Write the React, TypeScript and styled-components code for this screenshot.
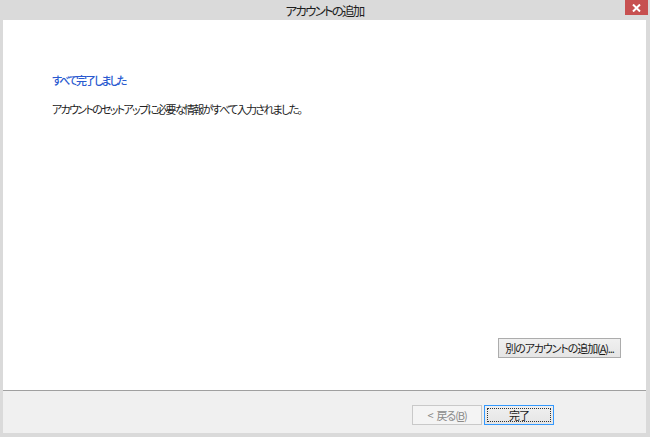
import React from "react";
import styled, { createGlobalStyle } from "styled-components";

const Global = createGlobalStyle`
  html, body { margin: 0; padding: 0; background: #dadada; }
  * { box-sizing: border-box; }
`;

const FONT = `"Noto Sans CJK JP", "Noto Sans", sans-serif`;

const Window = styled.div`
  width: 650px;
  height: 437px;
  background: #dadada;
  display: flex;
  flex-direction: column;
  padding: 0 4px 4px 3px;
  font-family: ${FONT};
  font-feature-settings: "palt";
`;

const TitleBar = styled.div`
  height: 20px;
  display: grid;
  grid-template-columns: 1fr auto 1fr;
  align-items: start;
`;

const Title = styled.div`
  grid-column: 2;
  font-size: 12.5px;
  line-height: 21px;
  color: #1e1e1e;
  letter-spacing: -1.8px;
  white-space: nowrap;
`;

const CloseButton = styled.div`
  grid-column: 3;
  justify-self: end;
  margin-right: -2px;
  width: 23px;
  height: 15px;
  background: #c75050;
  display: flex;
  align-items: center;
  justify-content: center;
`;

const Content = styled.div`
  flex: 1;
  background: #ffffff;
  border-bottom: 1px solid #a0a0a0;
  display: flex;
  flex-direction: column;
  padding: 52px 25px 32px 49px;
`;

const Heading = styled.div`
  font-size: 11px;
  line-height: 16px;
  color: #2a5ad0;
  font-weight: 500;
  letter-spacing: -2px;
  white-space: nowrap;
`;

const Message = styled.div`
  margin-top: 13px;
  font-size: 11px;
  line-height: 16px;
  color: #222;
  letter-spacing: -1.7px;
  white-space: nowrap;
`;

const Spacer = styled.div`
  flex: 1;
`;

const Button = styled.div<{ $w: number; $variant?: "default" | "disabled" | "normal" }>`
  width: ${(p) => p.$w}px;
  height: 20px;
  font-size: 11px;
  line-height: 18px;
  text-align: center;
  white-space: nowrap;
  position: relative;
  color: ${(p) => (p.$variant === "disabled" ? "#8a8a8a" : "#1a1a1a")};
  border: 1px solid
    ${(p) =>
      p.$variant === "default" ? "#3399ff" : p.$variant === "disabled" ? "#c9c9c9" : "#acacac"};
  background: ${(p) =>
    p.$variant === "disabled" ? "#f4f4f4" : "linear-gradient(#f0f0f0, #e5e5e5)"};
  letter-spacing: -1.1px;
`;

const FocusRect = styled.div`
  position: absolute;
  inset: 2px;
  border: 1px dotted #333;
`;

const AddRow = styled.div`
  display: flex;
  justify-content: flex-end;
`;

const Footer = styled.div`
  height: 42px;
  background: #f0f0f0;
  display: flex;
  justify-content: flex-end;
  align-items: flex-start;
  padding: 14px 92px 0 0;
  gap: 2px;
`;

const Underline = styled.span`
  text-decoration: underline;
`;

const Chevron = styled.span`
  margin-right: 4px;
`;

export default function App() {
  return (
    <>
      <Global />
      <Window>
        <TitleBar>
          <Title>アカウントの追加</Title>
          <CloseButton>
            <svg width="9" height="8" viewBox="0 0 9 8">
              <path d="M1 0.5 L8 7.5 M8 0.5 L1 7.5" stroke="#fff" strokeWidth="2" />
            </svg>
          </CloseButton>
        </TitleBar>
        <Content>
          <Heading>すべて完了しました</Heading>
          <Message>アカウントのセットアップに必要な情報がすべて入力されました。</Message>
          <Spacer />
          <AddRow>
            <Button $w={123} $variant="normal">
              別のアカウントの追加(<Underline>A</Underline>)...
            </Button>
          </AddRow>
        </Content>
        <Footer>
          <Button $w={70} $variant="disabled">
            <Chevron>&lt;</Chevron>戻る(<Underline>B</Underline>)
          </Button>
          <Button $w={70} $variant="default">
            <FocusRect />
            完了
          </Button>
        </Footer>
      </Window>
    </>
  );
}
